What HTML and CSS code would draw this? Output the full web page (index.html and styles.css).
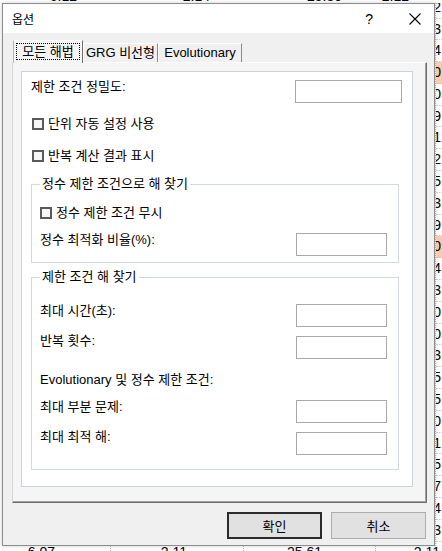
FILE: index.html
```html
<!DOCTYPE html>
<html lang="ko">
<head>
    <meta charset="UTF-8">
    <meta name="viewport" content="width=device-width, initial-scale=1.0">
    <title>옵션</title>
    <link rel="stylesheet" href="styles.css">
</head>
<body>
    <!-- worksheet row above the dialog -->
    <div class="strip-top">
        <span>6.12</span><span>2.14</span><span>25.80</span><span>2.12</span>
    </div>

    <div class="middle">
        <div class="strip-left"></div>

        <div class="dialog">
            <div class="titlebar">
                <span class="title">옵션</span>
                <span class="help">?</span>
                <svg class="close" width="12" height="12" viewBox="0 0 12 12">
                    <path d="M0.5 0.5 L11.5 11.5 M11.5 0.5 L0.5 11.5" stroke="#000" stroke-width="1.1" fill="none"/>
                </svg>
            </div>

            <div class="tabs">
                <div class="tab active"><span class="focus">모든 해법</span></div>
                <div class="tab t2">GRG 비선형</div>
                <div class="tab t3">Evolutionary</div>
            </div>

            <div class="tabpanel">
                <div class="page">
                    <div class="field">
                        <span class="label up">제한 조건 정밀도:</span>
                        <span class="box wide"></span>
                    </div>
                    <div class="check first"><span class="tick"></span>단위 자동 설정 사용</div>
                    <div class="check second"><span class="tick"></span>반복 계산 결과 표시</div>

                    <fieldset class="group group-int">
                        <legend>정수 제한 조건으로 해 찾기</legend>
                        <div class="check inner"><span class="tick"></span>정수 제한 조건 무시</div>
                        <div class="field rate">
                            <span class="label">정수 최적화 비율(%):</span>
                            <span class="box mt1"></span>
                        </div>
                    </fieldset>

                    <fieldset class="group group-solve">
                        <legend>제한 조건 해 찾기</legend>
                        <div class="field row-a">
                            <span class="label">최대 시간(초):</span>
                            <span class="box mt1"></span>
                        </div>
                        <div class="field row-b">
                            <span class="label">반복 횟수:</span>
                            <span class="box mt3"></span>
                        </div>
                        <div class="label row-c">Evolutionary 및 정수 제한 조건:</div>
                        <div class="field row-d">
                            <span class="label">최대 부분 문제:</span>
                            <span class="box mt1"></span>
                        </div>
                        <div class="field row-e">
                            <span class="label">최대 최적 해:</span>
                            <span class="box mt3"></span>
                        </div>
                    </fieldset>
                </div>
            </div>

            <div class="buttons">
                <button class="btn default">확인</button>
                <button class="btn">취소</button>
            </div>
        </div>

        <!-- last column of the worksheet, mostly behind the dialog -->
        <div class="strip-right">
            <div class="cell">2.12</div>
            <div class="cell">2.13</div>
            <div class="cell">2.14</div>
            <div class="cell hl">2.10</div>
            <div class="cell">2.20</div>
            <div class="cell">2.19</div>
            <div class="cell">2.11</div>
            <div class="cell">2.12</div>
            <div class="cell">2.15</div>
            <div class="cell">2.13</div>
            <div class="cell">2.19</div>
            <div class="cell hl">2.10</div>
            <div class="cell">2.14</div>
            <div class="cell">2.13</div>
            <div class="cell">2.10</div>
            <div class="cell">2.20</div>
            <div class="cell">2.13</div>
            <div class="cell">2.15</div>
            <div class="cell">2.15</div>
            <div class="cell">2.10</div>
            <div class="cell">2.11</div>
            <div class="cell">2.15</div>
            <div class="cell">2.17</div>
            <div class="cell">2.14</div>
            <div class="cell">2.13</div>
            <div class="cell">2.19</div>
        </div>
    </div>

    <!-- worksheet row below the dialog -->
    <div class="strip-bottom">
        <span>6.07</span><span>2.11</span><span>25.61</span><span>2.11</span>
    </div>
</body>
</html>
```

FILE: styles.css
```css
* {
    box-sizing: border-box;
}
body {
    margin: 0;
    width: 442px;
    height: 551px;
    overflow: hidden;
    background: #fff;
    color: #000;
    font-family: "Liberation Sans", "Noto Sans CJK KR", sans-serif;
    font-size: 13px;
}

/* worksheet strips around the dialog */
.strip-top,
.strip-bottom {
    display: grid;
    grid-template-columns: 110px 133px 132px 67px;
    overflow: hidden;
    font-size: 14px;
    line-height: 14px;
}
.strip-top {
    height: 3px;
}
.strip-bottom {
    height: 5px;
}
.strip-top span,
.strip-bottom span {
    text-align: right;
    white-space: nowrap;
}
.strip-top span {
    margin-top: -11px;
    padding-right: 33px;
}
.strip-bottom span {
    margin-top: -1px;
    border-left: 1px dotted #b0b0b0;
}
.strip-bottom span:nth-child(1) {
    padding-right: 55px;
    border-left: none;
}
.strip-bottom span:nth-child(2) {
    padding-right: 56px;
}
.strip-bottom span:nth-child(3) {
    padding-right: 53px;
}
.strip-bottom span:nth-child(4) {
    padding-right: 2px;
}
.middle {
    display: flex;
    height: 543px;
}
.strip-left {
    width: 2px;
}
.strip-right {
    width: 7px;
    overflow: hidden;
    font-size: 14px;
    padding-top: 0;
    border-left: 1px dotted #b0b0b0;
}
.cell {
    display: flex;
    justify-content: flex-end;
    height: 21.8px;
    line-height: 21px;
    padding-right: 1px;
    white-space: nowrap;
    border-bottom: 1px dotted #c8c8c8;
}
.cell:first-child {
    margin-top: -6.3px;
}
.cell.hl {
    background: #f8cbad;
}

/* dialog window */
.dialog {
    width: 433px;
    height: 543px;
    background: #f0f0f0;
    border: 1px solid #8c8c8c;
    box-shadow: 0 0 4px rgba(0, 0, 0, 0.2);
}
.titlebar {
    height: 29px;
    background: #fff;
    display: flex;
    align-items: center;
    padding-left: 9px;
}
.title {
    flex: 1;
    font-size: 12px;
}
.help {
    font-size: 14px;
    margin-right: 36px;
}
.close {
    margin-right: 13px;
}

/* tabs */
.tabs {
    display: flex;
    align-items: flex-end;
    height: 29px;
    padding-left: 10px;
}
.tab {
    height: 19px;
    padding: 0;
    text-align: center;
    line-height: 18px;
    white-space: nowrap;
    border-top: 1px solid #fff;
    border-left: 1px solid #fff;
    border-right: 1px solid #8a8a8a;
}
.tab.t2 {
    width: 75px;
}
.tab.t3 {
    width: 84px;
}
.tab.active {
    width: 70px;
    height: 23px;
    margin-bottom: -1px;
    padding: 2px 2px 0 2px;
    background: #f5f5f5;
    border-left: 1px solid #b5b5b5;
    border-right: 1px solid #6e6e6e;
}
.focus {
    display: block;
    line-height: 15px;
    border: 1px dotted #000;
}
.tabpanel {
    margin-left: 9px;
    width: 415px;
    height: 441px;
    padding: 8px 0 0 8px;
    background: #f5f5f5;
    border: 1px solid;
    border-color: #fff #6e6e6e #6e6e6e #d8d8d8;
    box-shadow: inset -1px -1px 0 #a0a0a0;
}

/* page content */
.page {
    width: 392px;
    height: 416px;
    padding: 8px 10px 0 9px;
    background: #fff;
    border: 1px solid #ccd3da;
}
.field {
    display: flex;
    justify-content: space-between;
    align-items: flex-start;
}
.label {
    line-height: 16px;
}
.label.up {
    margin-top: -1px;
}
.box {
    width: 91px;
    height: 23px;
    background: #fff;
    border: 1px solid #a9a9a9;
}
.box.wide {
    width: 107px;
}
.mt1 {
    margin-top: 1px;
}
.mt3 {
    margin-top: 3px;
}
.check {
    display: flex;
    align-items: center;
    line-height: 16px;
    padding-left: 1px;
}
.tick {
    width: 12px;
    height: 12px;
    margin-right: 4px;
    background: #f6f6f6;
    border: 2px solid #5a5a5a;
}
.check.first {
    margin-top: 13px;
}
.check.second {
    margin-top: 16px;
}
.check.inner {
    margin-top: 13px;
    padding-left: 0;
}

.group {
    width: 368px;
    margin: 0;
    padding: 0 11px 6px 8px;
    border: 1px solid #d3d9df;
}
.group legend {
    padding: 0 2px;
    line-height: 16px;
}
.group-int {
    margin-top: 12px;
}
.group-solve {
    margin-top: 6px;
    padding-bottom: 14px;
}
.rate {
    margin-top: 11px;
}
.row-a {
    margin-top: 18px;
}
.row-b {
    margin-top: 6px;
}
.row-c {
    margin-top: 13px;
}
.row-d {
    margin-top: 11px;
}
.row-e {
    margin-top: 6px;
}

/* buttons */
.buttons {
    display: flex;
    justify-content: flex-end;
    gap: 9px;
    margin: 9px 8px 0 0;
}
.btn {
    width: 95px;
    height: 27px;
    padding: 0;
    font-family: inherit;
    font-size: 13px;
    color: #000;
    background: #e1e1e1;
    border: 1px solid #adadad;
}
.btn.default {
    border: 2px solid #2b2b2b;
}
```
